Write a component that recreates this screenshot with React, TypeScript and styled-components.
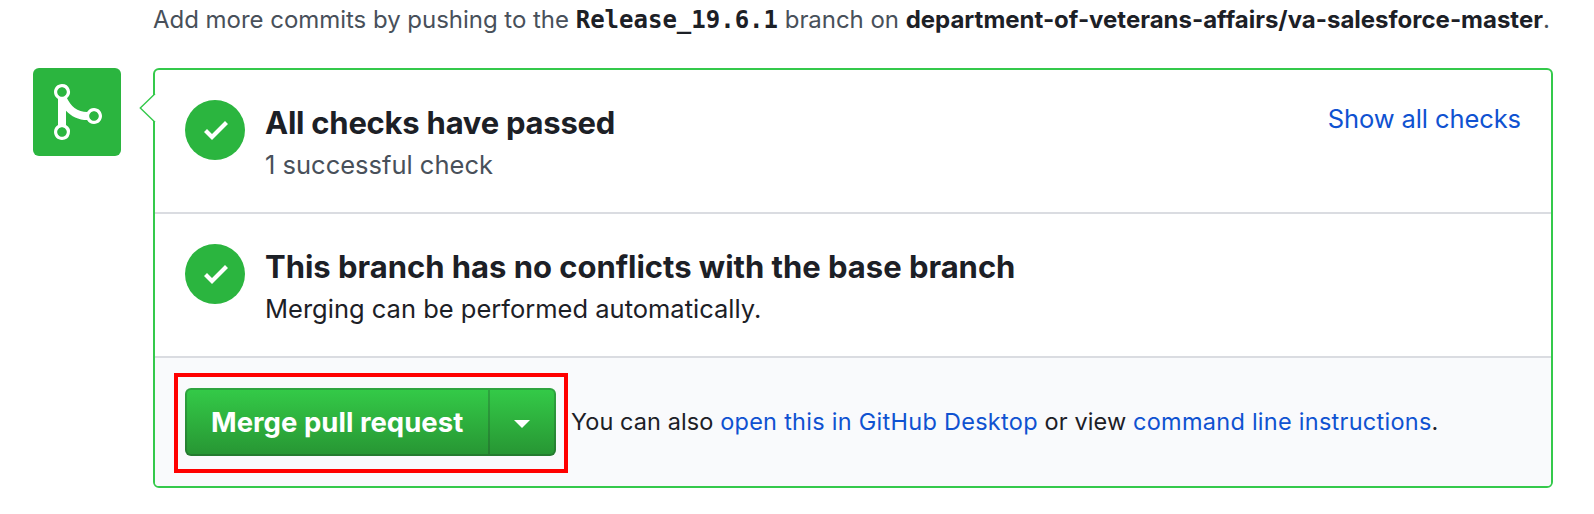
import React from 'react';
import styled, { createGlobalStyle } from 'styled-components';

const GlobalStyle = createGlobalStyle`
  body {
    margin: 0;
    background: #fff;
    color: #1c2026;
    font-family: Inter, 'Liberation Sans', sans-serif;
  }
`;

const Page = styled.main`
  box-sizing: border-box;
  width: 1594px;
  height: 514px;
  padding: 0 41px 0 33px;
  overflow: hidden;
`;

const PushHint = styled.p`
  margin: 0 0 0 120px;
  padding-top: 4px;
  height: 64px;
  font-size: 24px;
  line-height: 32px;
  color: #48505a;
  white-space: nowrap;
`;

const Tracked = styled.span<{ $spacing: number }>`
  letter-spacing: ${(p) => p.$spacing}px;
`;

const RepoName = styled.strong`
  font-weight: 650;
  letter-spacing: -0.005px;
  color: #1c2026;
`;

const BranchName = styled.code`
  font: 700 24px 'DejaVu Sans Mono', monospace;
  line-height: 1;
  color: #1c2026;
`;

const MergeArea = styled.section`
  display: flex;
  align-items: flex-start;
  gap: 32px;
`;

const StateBadge = styled.div`
  display: flex;
  box-sizing: border-box;
  flex: none;
  width: 88px;
  height: 88px;
  padding: 12px 0 0 21px;
  border-radius: 6px;
  background: #2bb53f;
  color: #fff;
`;

const Panel = styled.div`
  position: relative;
  box-sizing: border-box;
  width: 1400px;
  height: 420px;
  border: 2px solid #34c94b;
  border-radius: 6px;
`;

const Pointer = styled.svg`
  position: absolute;
  left: -16px;
  top: 23px;
`;

const StatusRow = styled.div`
  display: flex;
  box-sizing: border-box;
  height: 144px;
  padding: 30px;
  border-bottom: 2px solid #dadce1;
`;

const StatusIcon = styled.div`
  display: flex;
  box-sizing: border-box;
  flex: none;
  width: 60px;
  height: 60px;
  margin-right: 20px;
  padding: 14px 0 0 19px;
  border-radius: 50%;
  background: #2bb53f;
  color: #fff;
`;

const StatusText = styled.div`
  flex: 1;
  white-space: nowrap;
`;

const Heading = styled.h3<{ $spacing: number }>`
  margin: 3px 0 0;
  font-size: 31px;
  font-weight: 650;
  line-height: 40px;
  letter-spacing: ${(p) => p.$spacing}px;
`;

const Detail = styled.p<{ $muted?: boolean }>`
  margin: 2px 0 0;
  font-size: 25.5px;
  line-height: 40px;
  color: ${(p) => (p.$muted ? '#48505a' : '#1c2026')};
`;

const Link = styled.a<{ $spacing: number }>`
  color: #0f52d1;
  text-decoration: none;
  letter-spacing: ${(p) => p.$spacing}px;
`;

const ToggleLink = styled(Link)`
  height: 40px;
  font-size: 25.5px;
  line-height: 38px;
`;

const Footer = styled.div`
  display: flex;
  align-items: flex-start;
  box-sizing: border-box;
  height: 128px;
  padding: 15px 19px;
  border-radius: 0 0 4px 4px;
  background: #f9fafc;
`;

const Highlight = styled.div`
  box-sizing: border-box;
  flex: none;
  width: 394px;
  height: 100px;
  padding: 11px 7px;
  border: 4px solid #ff0000;
`;

const ButtonGroup = styled.div`
  display: flex;
  box-sizing: border-box;
  width: 371px;
  height: 68px;
  border: 2px solid rgba(27, 31, 35, 0.22);
  border-radius: 6px;
  background: linear-gradient(180deg, #34cb48, #279533) border-box;
`;

const Button = styled.button`
  display: flex;
  align-items: center;
  padding: 0;
  border: 0;
  background: none;
  color: #fff;
  font-family: inherit;
`;

const MergeButton = styled(Button)`
  width: 301px;
  padding: 0 0 1px 24px;
  font-size: 27.5px;
  font-weight: 650;
  letter-spacing: 0.02px;
  white-space: nowrap;
`;

const MenuButton = styled(Button)`
  flex: 1;
  padding: 4px 0 0 24px;
  border-left: 2px solid rgba(27, 31, 35, 0.22);
`;

const FooterText = styled.p`
  margin: 33px 0 0 3px;
  font-size: 23.5px;
  line-height: 32px;
  white-space: nowrap;
`;

const Check = () => (
  <StatusIcon>
    <svg width="24" height="32" viewBox="0 0 12 16" fill="currentColor">
      <path d="M12 5l-8 8-4-4 1.5-1.5L4 10l6.5-6.5L12 5z" />
    </svg>
  </StatusIcon>
);

const MergeIcon = () => (
  <svg width="48" height="64" viewBox="0 0 12 16" fill="currentColor">
    <path
      fillRule="evenodd"
      d="M10 7c-.73 0-1.38.41-1.73 1.02V8C7.22 7.98 6 7.64 5.14 6.98c-.75-.58-1.5-1.61-1.89-2.44A1.993 1.993 0 0 0 2 .99C.89.99 0 1.89 0 3a2 2 0 0 0 1 1.72v6.56c-.6.35-1 .99-1 1.72 0 1.11.89 2 2 2a1.993 1.993 0 0 0 1-3.72V7.67c.67.7 1.44 1.27 2.3 1.69.86.42 2.03.63 2.97.64v-.02c.36.61 1 1.02 1.73 1.02 1.11 0 2-.89 2-2 0-1.11-.89-2-2-2zm-6.8 6c0 .66-.55 1.2-1.2 1.2-.65 0-1.2-.55-1.2-1.2 0-.65.55-1.2 1.2-1.2.65 0 1.2.55 1.2 1.2zM2 4.2C1.34 4.2.8 3.65.8 3c0-.65.55-1.2 1.2-1.2.65 0 1.2.55 1.2 1.2 0 .65-.55 1.2-1.2 1.2zm8 6c-.66 0-1.2-.55-1.2-1.2 0-.65.55-1.2 1.2-1.2.65 0 1.2.55 1.2 1.2 0 .65-.55 1.2-1.2 1.2z"
    />
  </svg>
);

export default function App() {
  return (
    <Page>
      <GlobalStyle />
      <PushHint>
        <Tracked $spacing={-0.03}>Add more commits by pushing to the</Tracked>{' '}
        <BranchName>Release_19.6.1</BranchName>{' '}
        <Tracked $spacing={-0.05}>branch on</Tracked>{' '}
        <RepoName>department-of-veterans-affairs/va-salesforce-master</RepoName>.
      </PushHint>
      <MergeArea>
        <StateBadge>
          <MergeIcon />
        </StateBadge>
        <Panel>
          <Pointer width="18" height="30" viewBox="0 0 18 30">
            <path d="M16 1H18V29H16L2 15Z" fill="#fff" />
            <path d="M16 0.8L1.3 15L16 29.2" fill="none" stroke="#34c94b" strokeWidth="1.4" />
          </Pointer>
          <StatusRow>
            <Check />
            <StatusText>
              <Heading $spacing={-0.24}>All checks have passed</Heading>
              <Detail $muted>1 successful check</Detail>
            </StatusText>
            <ToggleLink $spacing={-0.088}>Show all checks</ToggleLink>
          </StatusRow>
          <StatusRow>
            <Check />
            <StatusText>
              <Heading $spacing={-0.02}>This branch has no conflicts with the base branch</Heading>
              <Detail>Merging can be performed automatically.</Detail>
            </StatusText>
          </StatusRow>
          <Footer>
            <Highlight>
              <ButtonGroup>
                <MergeButton>Merge pull request</MergeButton>
                <MenuButton aria-label="Select merge method">
                  <svg width="16" height="8" viewBox="0 0 16 8" fill="currentColor">
                    <path d="M0 0H16L8 8Z" />
                  </svg>
                </MenuButton>
              </ButtonGroup>
            </Highlight>
            <FooterText>
              <Tracked $spacing={0.08}>You can also </Tracked>
              <Link $spacing={0.272}>open this in GitHub Desktop</Link>{' '}
              <Tracked $spacing={0.15}>or view</Tracked>{' '}
              <Link $spacing={0.265}>command line instructions</Link>.
            </FooterText>
          </Footer>
        </Panel>
      </MergeArea>
    </Page>
  );
}
